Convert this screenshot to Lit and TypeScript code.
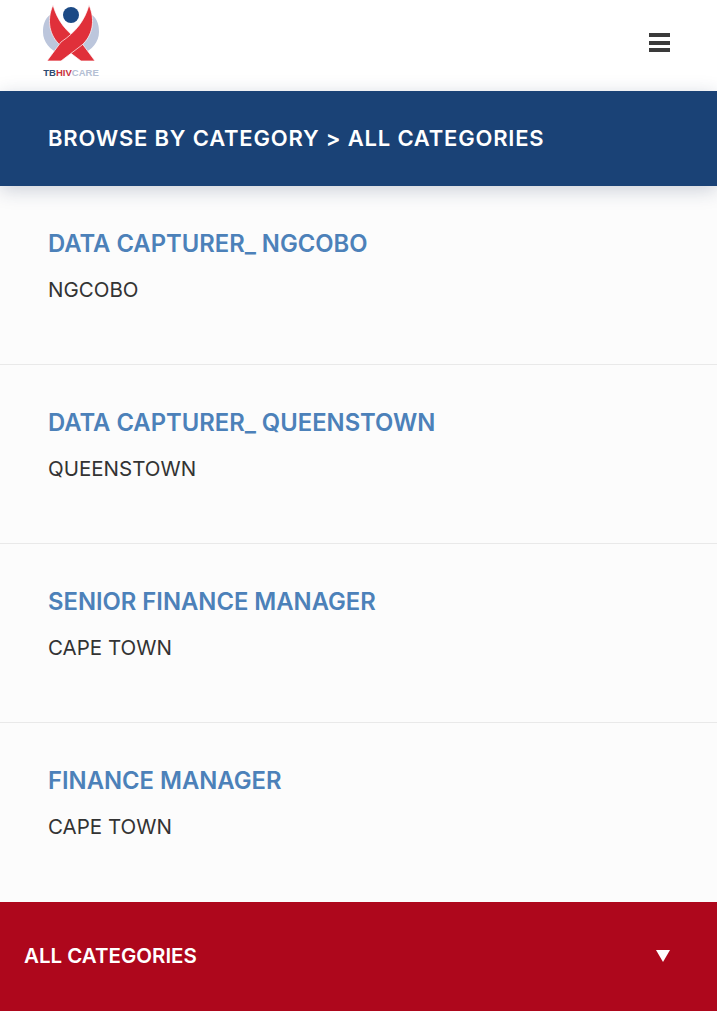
import { LitElement, html, css, svg } from "lit";
import { customElement } from "lit/decorators.js";

const jobs = [
  ["DATA CAPTURER_ NGCOBO", "NGCOBO"],
  ["DATA CAPTURER_ QUEENSTOWN", "QUEENSTOWN"],
  ["SENIOR FINANCE MANAGER", "CAPE TOWN"],
  ["FINANCE MANAGER", "CAPE TOWN"],
];

const crescent = "M51 14 C44 19 43 26 43 32 C43 42 50 50 60 54 L66 47 C54 38 48 26 51 14Z";
const ribbon = "M53 5 C46 21 50 36 60 45 L81 61 L95 61 L81 42 C66 32 57 20 53 5Z";

const logo = svg`
  <path d=${crescent} fill="#bcc6dc"/>
  <path d=${crescent} fill="#bcc6dc" transform="translate(142 0) scale(-1 1)"/>
  <circle cx="71" cy="15" r="8" fill="#1c4a85"/>
  <path d=${ribbon} fill="#e0303a" stroke="#fff" stroke-width=".7"/>
  <path d=${ribbon} fill="#e0303a" stroke="#fff" stroke-width=".7" transform="translate(142 0) scale(-1 1)"/>
`;

@customElement("app-root")
export class AppRoot extends LitElement {
  static styles = css`
    :host { display: block; width: 717px; height: 1024px; background: #fff; overflow: hidden; font-family: Inter, "Liberation Sans", sans-serif; }
    .top { height: 91px; display: flex; align-items: flex-start; justify-content: space-between; padding: 0 47.500px 0 40px; box-sizing: border-box; background: #fff; }
    .brand { display: flex; flex-direction: column; width: 62px; align-items: center; }
    .brand svg { display: block; width: 62px; height: 66px; }
    .word { font: 700 9.500px/11px "Liberation Sans", sans-serif; color: #2d4a70; white-space: nowrap; margin-top: 1px; }
    .word .r { color: #c8323c; }
    .word .g { color: #b4c0d4; }
    .burger { margin-top: 33px; width: 21px; display: flex; flex-direction: column; gap: 3.500px; }
    .burger i { display: block; height: 4px; background: #3a3a3a; }
    .banner { height: 95px; box-sizing: border-box; padding: 0 0 2px 48px; background: #1a4276; display: flex; align-items: center; color: #fff; font: 600 22px/1 Inter, sans-serif; letter-spacing: 0.8px; box-shadow: 0 4px 18px rgba(30,50,90,.22); position: relative; }
    .list { background: #fcfcfc; }
    .row { height: 179px; padding: 44px 48px 0; box-sizing: border-box; border-bottom: 1px solid #e9e9e9; }
    .row:first-child { height: 178.500px; }
    .row:last-child { height: 179.500px; border-bottom: none; }
    .title { color: #4c81b9; font: 600 23.800px/28px Inter, sans-serif; }
    .loc { color: #333; font: 400 20.500px/24px Inter, sans-serif; margin-top: 20px; }
    .bar { height: 108.500px; background: #ae071c; color: #fff; display: flex; align-items: center; justify-content: space-between; padding: 0 47px 0 24px; font: 600 20.500px/1 Inter, sans-serif; }
    .tri { width: 0; height: 0; border-left: 7.500px solid transparent; border-right: 7.500px solid transparent; border-top: 12px solid #fff; }
  `;

  render() {
    return html`
      <div class="top">
        <div class="brand">
          <svg viewBox="40 0 62 66">${logo}</svg>
          <div class="word">TB<span class="r">HIV</span><span class="g">CARE</span></div>
        </div>
        <div class="burger"><i></i><i></i><i></i></div>
      </div>
      <div class="banner">BROWSE BY CATEGORY &gt; ALL CATEGORIES</div>
      <div class="list">
        ${jobs.map(([t, l]) => html`<div class="row"><div class="title">${t}</div><div class="loc">${l}</div></div>`)}
      </div>
      <div class="bar"><span>ALL CATEGORIES</span><span class="tri"></span></div>
    `;
  }
}
